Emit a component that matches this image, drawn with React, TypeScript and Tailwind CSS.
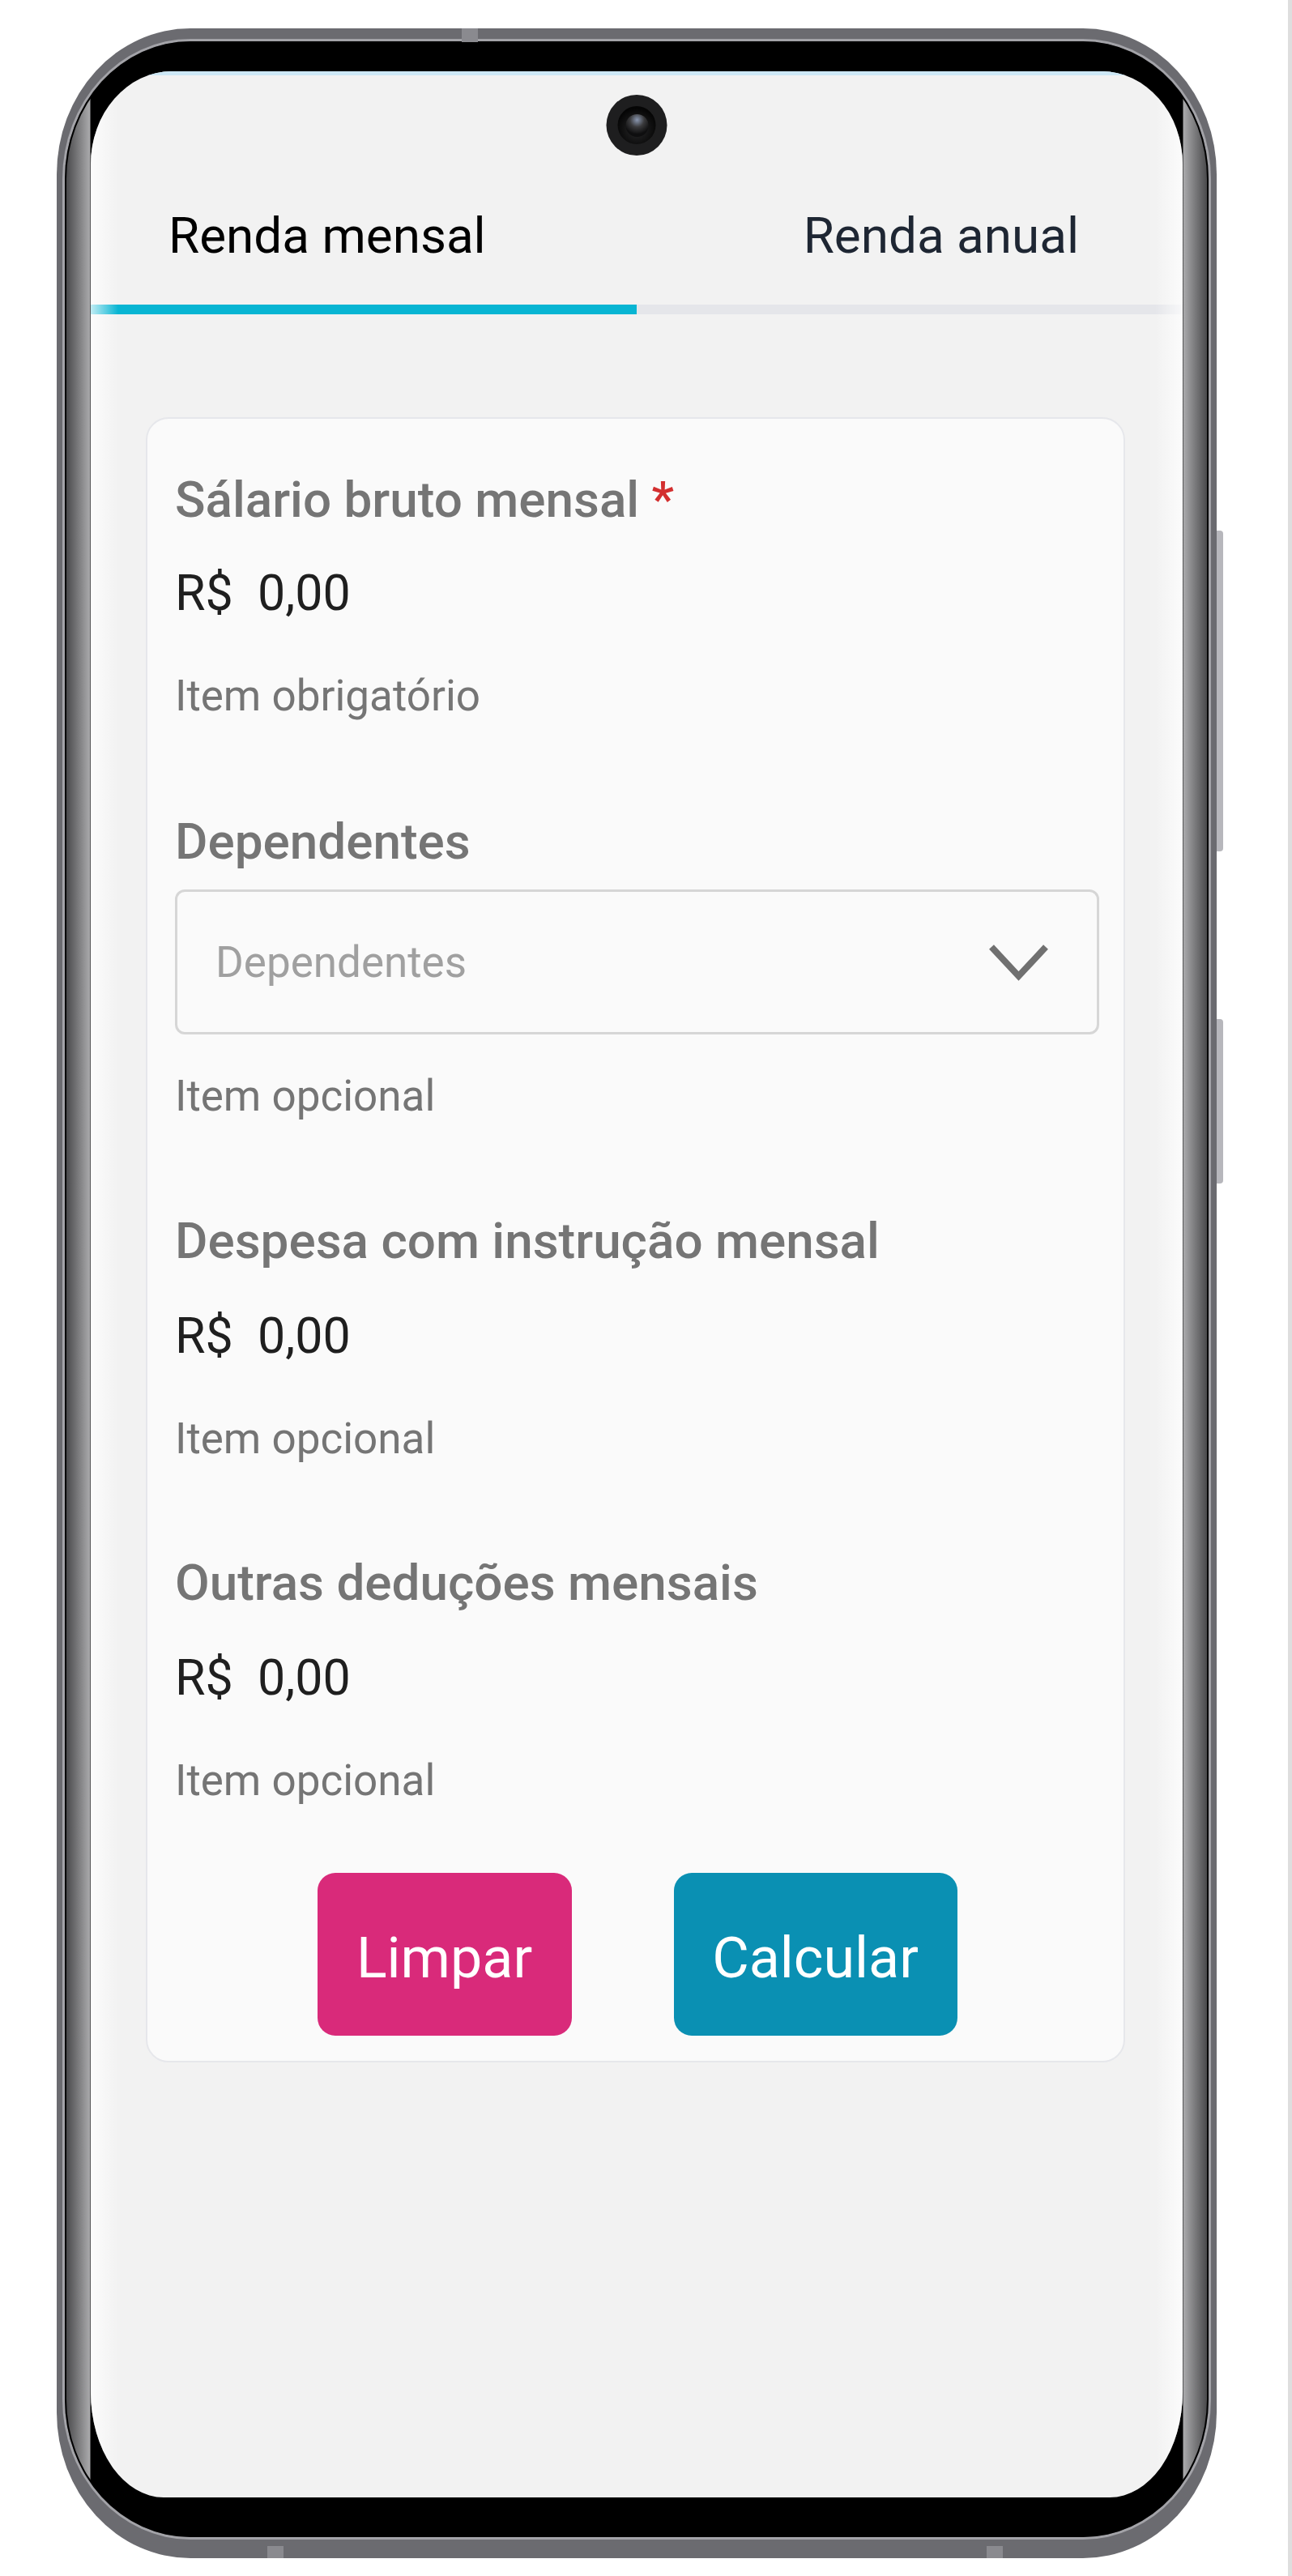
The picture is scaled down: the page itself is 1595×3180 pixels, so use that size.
import React from "react";

function Label({ text, required }: { text: string; required?: boolean }) {
  return (
    <div className="text-[62px] leading-[68px] font-medium text-[#757575] whitespace-nowrap">
      {text}
      {required && <span className="text-[#d32f2f]"> *</span>}
    </div>
  );
}

function Value({ className }: { className: string }) {
  return (
    <div className={`text-[61px] leading-[72px] text-[#1f1f1f] whitespace-nowrap ${className}`}>
      R$<span className="ml-[30px]">0,00</span>
    </div>
  );
}

function Helper({ text, className }: { text: string; className: string }) {
  return (
    <div className={`text-[53px] leading-[62px] text-[#757575] whitespace-nowrap ${className}`}>
      {text}
    </div>
  );
}

function Screen() {
  return (
    <div className="relative flex-1 overflow-hidden rounded-tl-[100px_115px] rounded-tr-[100px_115px] rounded-bl-[90px_130px] rounded-br-[90px_130px] bg-[#f2f2f2] flex flex-col">
      <div className="h-[5px] bg-[#cde8f6]" />
      {/* tabs */}
      <div className="pt-[162px] flex justify-between pl-[96px] pr-[128px]">
        <div className="text-[62px] leading-[72px] text-black whitespace-nowrap">Renda mensal</div>
        <div className="text-[62px] leading-[72px] text-[#1e2633] whitespace-nowrap">Renda anual</div>
      </div>
      <div className="mt-[49px] flex h-[12px]">
        <div className="w-1/2 bg-[#08b5d3]" />
        <div className="w-1/2 bg-[#e5e6ea]" />
      </div>
      {/* card */}
      <div className="mt-[127px] ml-[68px] mr-[71px] rounded-[28px] border-2 border-[#e6e7eb] bg-[#fafafa] pt-[66px] pl-[34px] pr-[30px] pb-[31px] flex flex-col">
        <Label text="Sálario bruto mensal" required />
        <Value className="mt-[45px]" />
        <Helper text="Item obrigatório" className="mt-[60px]" />

        <div className="mt-[115px]">
          <Label text="Dependentes" />
        </div>
        <div className="mt-[25px] h-[179px] rounded-[12px] border-[3px] border-[#d6d6d6] flex items-center justify-between pl-[47px] pr-[59px]">
          <span className="text-[53px] leading-[62px] text-[#a0a0a0]">Dependentes</span>
          <svg width="75" height="46" viewBox="0 0 75 46" fill="none">
            <polyline points="4,4 37.5,40 71,4" stroke="#707070" strokeWidth="8" strokeLinecap="butt" strokeLinejoin="miter" />
          </svg>
        </div>
        <Helper text="Item opcional" className="mt-[45px]" />

        <div className="mt-[114px]">
          <Label text="Despesa com instrução mensal" />
        </div>
        <Value className="mt-[47px]" />
        <Helper text="Item opcional" className="mt-[60px]" />

        <div className="mt-[113px]">
          <Label text="Outras deduções mensais" />
        </div>
        <Value className="mt-[47px]" />
        <Helper text="Item opcional" className="mt-[60px]" />

        <div className="mt-[83px] flex justify-center gap-[126px]">
          <button className="w-[314px] h-[201px] rounded-[22px] bg-[#d92a7a] text-white text-[70px] leading-[80px] pt-[8px]">
            Limpar
          </button>
          <button className="w-[350px] h-[201px] rounded-[22px] bg-[#0a90b3] text-white text-[70px] leading-[80px] pt-[8px]">
            Calcular
          </button>
        </div>
      </div>

      {/* edge glow overlays */}
      <div className="pointer-events-none absolute left-0 top-0 bottom-0 w-[34px] bg-[linear-gradient(to_right,rgba(255,255,255,0.75),rgba(255,255,255,0))]" />
      <div className="pointer-events-none absolute right-0 top-0 bottom-0 w-[34px] bg-[linear-gradient(to_left,rgba(255,255,255,0.75),rgba(255,255,255,0))]" />

      {/* camera */}
      <div className="absolute top-[29px] left-1/2 -translate-x-1/2 w-[75px] h-[75px] rounded-full bg-[#1e1e1f] flex items-center justify-center">
        <div className="w-[47px] h-[47px] rounded-full bg-[radial-gradient(circle_at_50%_60%,#2a2a2b,#050505_70%)] flex items-center justify-center">
          <div className="w-[28px] h-[28px] rounded-full bg-[radial-gradient(circle_at_50%_25%,#8a97b0,#3a3a3c_35%,#0e0e0f_70%)]" />
        </div>
      </div>
    </div>
  );
}

export default function App() {
  return (
    <div className="w-[1595px] h-[3180px] bg-white flex font-['Roboto',sans-serif]">
      <div className="flex-1 pt-[35px] pl-[70px]">
        <div className="flex items-start">
          <div className="relative w-[1432px] h-[3123px] rounded-[165px_/_180px] bg-[#6b6b70] pt-[16px] px-[10px] pb-[26px] flex">
            {/* antenna lines */}
            <div className="absolute top-0 left-[500px] w-[20px] h-[17px] bg-[#8a8a8f]" />
            <div className="absolute bottom-0 left-[260px] w-[20px] h-[15px] bg-[#8a8a8f]" />
            <div className="absolute bottom-0 left-[1148px] w-[20px] h-[15px] bg-[#8a8a8f]" />
            <div className="flex-1 flex rounded-[155px_/_170px] border-2 border-black ring-[3px] ring-[#a3a3a8] bg-[linear-gradient(to_right,#4a4a4c,#aaaaac_29px,#000_30px,#000_calc(100%-30px),#aaaaac_calc(100%-29px),#4a4a4c)] pt-[35px] px-[30px] pb-[47px]">
              <Screen />
            </div>
          </div>
          <div className="flex flex-col pt-[620px] gap-[207px]">
            <div className="w-[8px] h-[396px] bg-[#b7b7bc] rounded-r-[4px]" />
            <div className="w-[8px] h-[203px] bg-[#b7b7bc] rounded-r-[4px]" />
          </div>
        </div>
      </div>
      <div className="w-[5px] bg-[#dedede]" />
    </div>
  );
}
